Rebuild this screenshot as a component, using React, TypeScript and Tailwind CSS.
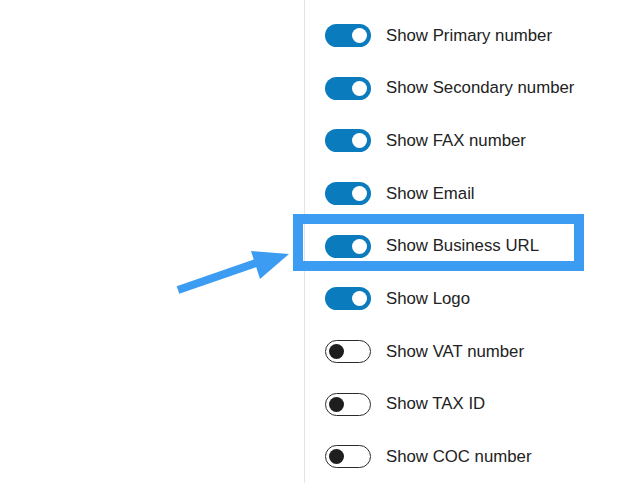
import React from 'react'

interface Setting {
  label: string
  enabled: boolean
}

const settings: Setting[] = [
  { label: 'Show Primary number', enabled: true },
  { label: 'Show Secondary number', enabled: true },
  { label: 'Show FAX number', enabled: true },
  { label: 'Show Email', enabled: true },
  { label: 'Show Business URL', enabled: true },
  { label: 'Show Logo', enabled: true },
  { label: 'Show VAT number', enabled: false },
  { label: 'Show TAX ID', enabled: false },
  { label: 'Show COC number', enabled: false },
]

function Toggle({ enabled }: { enabled: boolean }) {
  if (enabled) {
    return (
      <div className="flex h-[23px] w-[46px] shrink-0 items-center justify-end rounded-full bg-[#0a7bbd] pr-[4px]">
        <div className="h-[15px] w-[15px] rounded-full bg-white" />
      </div>
    )
  }
  return (
    <div className="flex h-[23px] w-[46px] shrink-0 items-center rounded-full border-[1.5px] border-[#2b2b2b] bg-white pl-[3px]">
      <div className="h-[15px] w-[15px] rounded-full bg-[#1e1e1e]" />
    </div>
  )
}

export default function App() {
  return (
    <div className="relative h-[491px] w-[643px] overflow-hidden bg-white font-['Liberation_Sans',sans-serif]">
      <div className="ml-[304px] flex h-[483px] flex-col border-l border-[#e4e4e4] pt-[9px] pl-[20px]">
        {settings.map(setting => (
          <div key={setting.label} className="flex h-[53px] items-center gap-[15px]">
            <Toggle enabled={setting.enabled} />
            <span className="text-[16.8px] text-[#222]">{setting.label}</span>
          </div>
        ))}
      </div>

      {/* highlight */}
      <div className="absolute left-[293px] top-[214px] h-[57px] w-[291px] border-[10px] border-[#3b9cf2]" />

      <svg className="absolute left-0 top-0" width="643" height="491" viewBox="0 0 643 491">
        <line x1="178" y1="290" x2="262" y2="261" stroke="#3b9cf2" strokeWidth="8" />
        <polygon points="289,254 251,251 260,279" fill="#3b9cf2" />
      </svg>
    </div>
  )
}
